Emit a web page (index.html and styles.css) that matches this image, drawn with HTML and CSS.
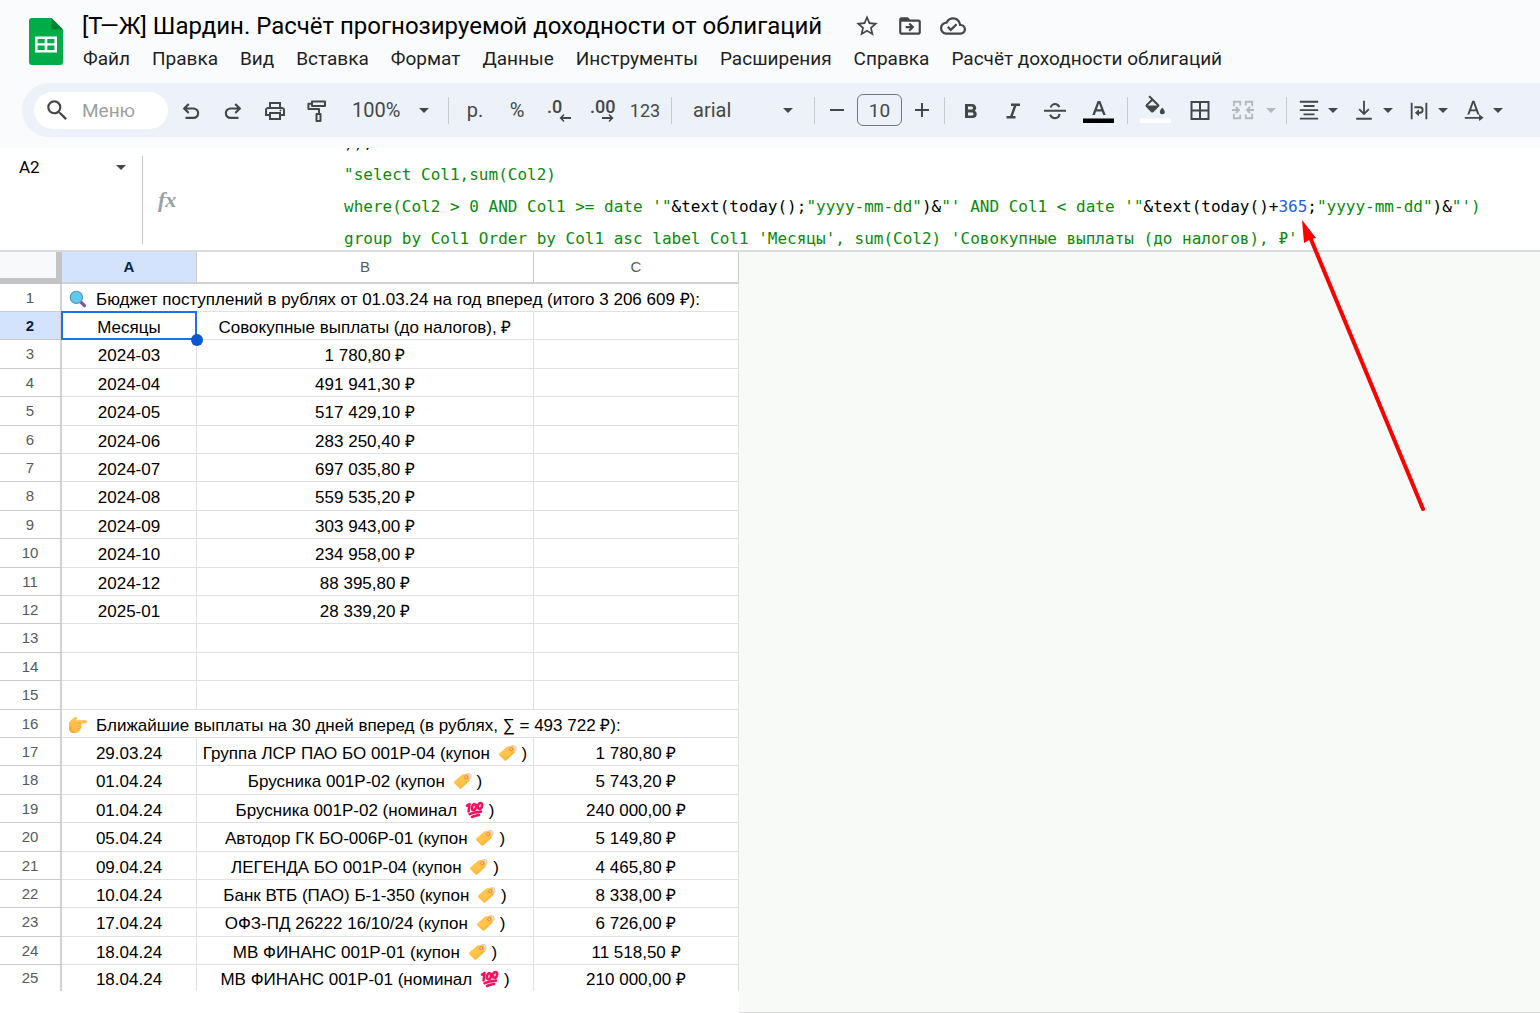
FILE: index.html
```html
<!DOCTYPE html>
<html lang="ru">
<head>
<meta charset="utf-8">
<meta name="viewport" content="width=device-width, initial-scale=1">
<title>[Т—Ж] Шардин. Расчёт прогнозируемой доходности от облигаций</title>
<link rel="stylesheet" href="styles.css">
</head>
<body>
<svg class="sprite" aria-hidden="true">
  <symbol id="i-tag" viewBox="0 0 20 18">
    <circle cx="15.2" cy="4.4" r="2.9" fill="none" stroke="#d3ccd8" stroke-width="1.2"/>
    <path d="M9.6 2.6 14.6 2.2Q16.4 2.2 16.5 4L16.6 8.8 8.6 16.3Q7.4 17.3 6.3 16.2L1.6 11.6Q.6 10.4 1.7 9.3Z" fill="#fdb83e"/>
    <path d="M9.6 2.6 14.6 2.2Q16.4 2.2 16.5 4L16.55 6 8 13.8 1.2 10.6 1.7 9.3Z" fill="#ffc94f" opacity=".7"/>
    <circle cx="13.2" cy="5.2" r="2" fill="#f08a4b"/><circle cx="13.2" cy="5.2" r=".9" fill="#e9d3d0"/>
  </symbol>
  <symbol id="i-hundred" viewBox="0 0 20 18">
    <g fill="none" stroke="#f0135f" stroke-linecap="round" stroke-linejoin="round">
      <path d="M2 4.6 4.5 3.2 3.6 10.4" stroke-width="2.6"/>
      <ellipse cx="9" cy="6.2" rx="1.9" ry="3.1" stroke-width="2.6" transform="rotate(12 9 6.2)"/>
      <ellipse cx="15" cy="4.9" rx="2" ry="3" stroke-width="2.6" transform="rotate(15 15 4.900)"/>
      <path d="M4.600 13.200Q9 11 16 10.600M7 16Q10 14.600 14 14" stroke-width="2.600"/>
    </g>
  </symbol>
  <symbol id="i-lens" viewBox="0 0 20 20">
    <path d="M12.4 12.800 17.200 17.400" stroke="#8c4f97" stroke-width="3.600" stroke-linecap="round"/>
    <circle cx="8.200" cy="8.200" r="6.800" fill="#5fcbea" stroke="#5b8fb8" stroke-width="1.300"/>
  </symbol>
  <symbol id="i-hand" viewBox="0 0 20 18">
    <path d="M1 7Q3.600 3 7 1Q9.200 0 9 2.300L8 4.200H17.400Q19.300 4.400 19.300 5.700T17.500 7.200H12.600Q14.300 8.200 13 10Q14 11.500 12.300 12.800Q12.800 14.600 11 15.300Q10.800 17 8.600 17H4.500Q1.600 16.600 1 13Z" fill="#ffc043"/>
    <path d="M9 7.400H13M8.600 10.200H12.900M8.600 13H12.200" stroke="#f5a84a" stroke-width="1" fill="none" stroke-linecap="round"/>
    <path d="M1 12.500Q1.800 16.400 4.500 17H8Q3.600 14.800 3 9Z" fill="#f29a3c" opacity=".6"/>
  </symbol>
</svg>

<header class="top">
  <div class="brand">
    <svg class="logo" viewBox="0 0 34 47" role="img" aria-label="Таблицы">
      <path d="M3 0H22.500L34 11.500V44Q34 47 31 47H3Q0 47 0 44V3Q0 0 3 0Z" fill="#00ac47"/>
      <path d="M22.500 0 34 11.500H22.500Z" fill="#00832d"/>
      <path d="M6 18.500H28V34.500H6ZM8.600 21V25.200H15.700V21ZM18.300 21V25.200H25.400V21ZM8.600 27.600V31.900H15.700V27.600ZM18.300 27.600V31.900H25.400V27.600Z" fill="#fff" fill-rule="evenodd"/>
    </svg>
    <div class="heading">
      <div class="title-row">
        <h1>[Т—Ж] Шардин. Расчёт прогнозируемой доходности от облигаций</h1>
        <button class="doc-action" aria-label="Пометить"><svg viewBox="0 0 24 24"><path d="M22 9.240l-7.190-.620L12 2 9.190 8.630 2 9.240l5.460 4.730L5.820 21 12 17.270 18.180 21l-1.630-7.030L22 9.240zM12 15.400l-3.760 2.270 1-4.280-3.320-2.880 4.380-.380L12 6.100l1.710 4.040 4.380.380-3.320 2.880 1 4.280L12 15.400z"/></svg></button>
        <button class="doc-action" aria-label="Переместить"><svg viewBox="0 0 24 24"><path d="M20 6h-8l-2-2H4c-1.100 0-2 .900-2 2v12c0 1.100.900 2 2 2h16c1.100 0 2-.900 2-2V8c0-1.100-.900-2-2-2zm0 12H4V8h16v10zm-8-1 4-4-4-4-1.400 1.400L12.200 12H8v2h4.200l-1.600 1.600L12 17z"/></svg></button>
        <button class="doc-action" aria-label="Сохранено на Диске"><svg viewBox="0 0 24 24"><path d="M19.350 10.040C18.670 6.590 15.640 4 12 4 9.110 4 6.600 5.640 5.350 8.040 2.340 8.360 0 10.910 0 14c0 3.310 2.690 6 6 6h13c2.760 0 5-2.240 5-5 0-2.640-2.050-4.780-4.650-4.960zM19 18H6c-2.210 0-4-1.790-4-4 0-2.050 1.530-3.760 3.560-3.970l1.070-.110.500-.950C8.080 7.140 9.940 6 12 6c2.620 0 4.880 1.860 5.390 4.430l.300 1.500 1.530.110c1.560.100 2.780 1.410 2.780 2.960 0 1.650-1.350 3-3 3zm-9-3.820-2.090-2.090L6.500 13.500 10 17l6.010-6.010-1.410-1.410L10 14.180z"/></svg></button>
      </div>
      <nav class="menu">
        <button>Файл</button><button>Правка</button><button>Вид</button><button>Вставка</button><button>Формат</button><button>Данные</button><button>Инструменты</button><button>Расширения</button><button>Справка</button><button>Расчёт доходности облигаций</button>
      </nav>
    </div>
  </div>

  <div class="toolbar" role="toolbar" aria-label="Панель инструментов">
    <label class="search">
      <svg viewBox="0 0 24 24" aria-hidden="true"><path d="M15.500 14h-.790l-.280-.270A6.470 6.470 0 0 0 16 9.500 6.500 6.500 0 1 0 9.500 16c1.610 0 3.090-.590 4.230-1.570l.270.280v.790l5.700 5.700 1.490-1.490L15.500 14zm-6 0C7.010 14 5 11.990 5 9.500S7.010 5 9.500 5 14 7.010 14 9.500 11.990 14 9.500 14z"/></svg>
      <input type="text" placeholder="Меню" aria-label="Поиск в меню">
    </label>
    <button class="tool" aria-label="Отменить"><svg viewBox="0 0 24 24"><path d="M6.500 21v-2.200h7.800q1.600 0 2.700-1 1.100-1 1.100-2.600t-1.100-2.600q-1.100-1-2.700-1H7.800l2.700 2.700L9 15.800 3.700 10.500 9 5.200l1.500 1.500-2.700 2.700h6.500q2.500 0 4.200 1.600t1.700 4.200-1.700 4.200T14.300 21z"/></svg></button>
    <button class="tool" aria-label="Повторить"><svg viewBox="0 0 24 24"><path d="M17.500 21v-2.200H9.700q-1.600 0-2.700-1-1.100-1-1.100-2.600t1.100-2.600q1.100-1 2.700-1h6.500l-2.700 2.700 1.500 1.500 5.300-5.300L15 5.200l-1.500 1.500 2.700 2.700H9.700q-2.500 0-4.200 1.600t-1.700 4.200 1.700 4.200T9.700 21z"/></svg></button>
    <button class="tool" aria-label="Печать"><svg viewBox="0 0 24 24"><path d="M19 9h-1V4H6v5H5c-1.660 0-3 1.340-3 3v6h4v4h12v-4h4v-6c0-1.660-1.340-3-3-3zM8 6h8v3H8V6zm8 14H8v-4h8v4zm2-4v-2H6v2H4v-4c0-.550.450-1 1-1h14c.550 0 1 .450 1 1v4h-2zm-.500-4.500a1 1 0 1 0 .010 2 1 1 0 0 0-.010-2z"/></svg></button>
    <button class="tool" aria-label="Копировать форматирование"><svg viewBox="0 0 24 24"><path d="M7 2.500h13q1 0 1 1V8q0 1-1 1H7Q6 9 6 8V6.800H4.400V10H14q1 0 1 1v4h.500q1 0 1 1v7q0 1-1 1h-4q-1 0-1-1v-7q0-1 1-1H13v-3H3.400q-1 0-1-1V5.800q0-1 1-1H6V3.500q0-1 1-1zM8 4.500V7h11V4.500zM12.500 17v5h2v-5z"/></svg></button>
    <select class="zoom" aria-label="Масштаб"><option>100%</option></select>
    <span class="sep"></span>
    <button class="tool text" aria-label="Денежный формат">р.</button>
    <button class="tool text" aria-label="Процентный формат">%</button>
    <button class="tool decimals" aria-label="Уменьшить число знаков"><span>.0</span><svg viewBox="0 0 12 8"><path d="M4.500 0 5.500 1 3.800 2.900H12V5.100H3.800L5.500 7 4.500 8 .5 4Z"/></svg></button>
    <button class="tool decimals" aria-label="Увеличить число знаков"><span>.00</span><svg viewBox="0 0 12 8"><path d="M7.500 0 6.500 1 8.200 2.900H0V5.100H8.200L6.500 7 7.500 8 11.500 4Z"/></svg></button>
    <button class="tool small" aria-label="Другие форматы">123</button>
    <span class="sep"></span>
    <select class="font" aria-label="Шрифт"><option>arial</option></select>
    <span class="sep"></span>
    <button class="tool step" aria-label="Уменьшить размер"><svg viewBox="0 0 24 24"><path d="M5 11h14v2H5z"/></svg></button>
    <input class="size" type="text" value="10" aria-label="Размер шрифта">
    <button class="tool step" aria-label="Увеличить размер"><svg viewBox="0 0 24 24"><path d="M11 5h2v6h6v2h-6v6h-2v-6H5v-2h6z"/></svg></button>
    <span class="sep"></span>
    <button class="tool" aria-label="Полужирный"><svg viewBox="0 0 24 24"><path d="M15.600 12.790c.970-.670 1.650-1.770 1.650-2.790 0-2.260-1.750-4-4-4H6v14h8.040c2.090 0 3.710-1.700 3.710-3.790 0-1.520-.860-2.820-2.150-3.420zM9 8.500h3.500c.830 0 1.500.670 1.500 1.500s-.670 1.500-1.500 1.500H9v-3zm4 9H9v-3h4c.830 0 1.500.670 1.500 1.500s-.670 1.500-1.500 1.500z"/></svg></button>
    <button class="tool" aria-label="Курсив"><svg viewBox="0 0 24 24"><path d="M10 5.500v2.600h2.800L9.200 18H5.500v2.600h9V18h-2.700l3.600-9.900H19V5.500z"/></svg></button>
    <button class="tool" aria-label="Зачёркнутый"><svg viewBox="0 0 24 24"><path d="M1 11.700h22v2H1zM6.700 9.500C7.500 6.500 9.500 5 12 5s4.400 1.300 5.200 3.700l-2.100.8C14.600 8 13.600 7.100 12 7.100c-1.500 0-2.600.8-3.100 2.400zM17.500 16c0 3-2.300 5.200-5.400 5.200-3 0-5.100-1.700-5.900-4.200l2-.8c.6 1.800 2 2.900 3.900 2.900 1.800 0 3.200-1.100 3.200-3.100z"/></svg></button>
    <button class="tool swatch" aria-label="Цвет текста"><svg viewBox="0 0 32 32"><path d="M14.600 7h2.800l5.300 14h-2.500l-1.300-3.600h-5.800L11.800 21H9.300zM13.900 15.300h4.200L16 9.400z"/><path fill="#000" d="M0 24.500h31v4.500H0z"/></svg></button>
    <span class="sep"></span>
    <button class="tool swatch" aria-label="Цвет заливки"><svg viewBox="0 0 32 32"><path d="M8.300 2.800 9.900 1.400 19 10.400Q20 11.500 19 12.600L13.500 18Q12.200 19 11 18L5.900 12.800Q4.900 11.600 5.900 10.400L11 5.500ZM12.400 6.900 7.700 11.600H17.100ZM22.200 13.500q2.600 2.900 2.600 4.200a2.500 2.500 0 0 1-5 0q0-1.300 2.400-4.200z"/><path fill="#fff" d="M0 24.500h31v4.500H0z"/></svg></button>
    <button class="tool" aria-label="Границы"><svg viewBox="0 0 24 24"><path d="M2.500 3v19h19V3h-19zm8.500 17H4.500v-6.500H11V20zm0-8.500H4.500V5H11v6.500zm8.500 8.500H13v-6.500h6.500V20zm0-8.500H13V5h6.500v6.500z"/></svg></button>
    <button class="tool split" aria-label="Объединить ячейки" disabled><svg viewBox="0 0 24 24"><path d="M1 2h9v5H8V4H3v4H1zm13 0h9v6h-2V4h-5v3h-2zM1 16h2v4h5v-3h2v5H1zm20 0h2v6h-9v-5h2v3h5zM0 11h5L3.500 9.500 5 8l4 4-4 4-1.500-1.500L5 13H0zm24 0h-5l1.500-1.500L19 8l-4 4 4 4 1.500-1.500L19 13h5z"/></svg><i class="caret"></i></button>
    <span class="sep"></span>
    <button class="tool split" aria-label="Горизонтальное выравнивание"><svg viewBox="0 0 24 24"><path d="M2 2h20v2H2zm4 4.600h12v2H6zM2 11.200h20v2H2zm4 4.600h12v2H6zM2 20.400h20v2H2z"/></svg><i class="caret"></i></button>
    <button class="tool split" aria-label="Вертикальное выравнивание"><svg viewBox="0 0 24 24"><path d="M3.500 20.500h17v2h-17zM11 2h2v12l3.600-3.600L18 11.800l-6 6-6-6 1.400-1.400L11 14z"/></svg><i class="caret"></i></button>
    <button class="tool split" aria-label="Перенос текста"><svg viewBox="0 0 24 24"><path d="M3 4h2v18H3zm16 0h2v18h-2zM7 8h6q4 0 4 4t-4 4H12V18.800L7.500 15 12 11.200V14h1q2 0 2-2t-2-2H7z"/></svg><i class="caret"></i></button>
    <button class="tool split" aria-label="Поворот текста"><svg viewBox="0 0 24 24"><path d="M10.200 2h2.200L18 17h-2.300l-1.300-3.600H8.200L6.900 17H4.700zm-1.300 9.400h4.800L11.300 4.600zM2 19.500h15.500v-2.800L22.500 20.500l-5 3.500v-2.500H2z"/></svg><i class="caret"></i></button>
  </div>
</header>

<section class="formula-bar">
  <label class="name-box"><select aria-label="Диапазон"><option>A2</option></select></label>
  <span class="fx" aria-hidden="true">fx</span>
  <div class="formula" role="textbox" aria-label="Формула" tabindex="0"><pre><b>));</b>
"select Col1,sum(Col2)
where(Col2 &gt; 0 AND Col1 &gt;= date '"<b>&amp;text(today();</b>"yyyy-mm-dd"<b>)&amp;</b>"' AND Col1 &lt; date '"<b>&amp;text(today()+</b><em>365</em><b>;</b>"yyyy-mm-dd"<b>)&amp;</b>"')
group by Col1 Order by Col1 asc label Col1 'Месяцы', sum(Col2) 'Совокупные выплаты (до налогов), ₽'</pre></div>
</section>

<main class="sheet">
  <table class="grid">
    <colgroup><col class="c-num"><col class="c-a"><col class="c-b"><col class="c-c"></colgroup>
    <thead><tr><td class="corner"></td><th scope="col" class="active">A</th><th scope="col">B</th><th scope="col">C</th></tr></thead>
    <tbody>
      <tr><th scope="row">1</th><td colspan="3" class="wide"><svg class="emoji lead"><use href="#i-lens"/></svg>Бюджет поступлений в рублях от 01.03.24 на год вперед (итого 3 206 609 ₽):</td></tr>
      <tr><th scope="row" class="active">2</th><td class="selected">Месяцы</td><td>Совокупные выплаты (до налогов), ₽</td><td></td></tr>
      <tr><th scope="row">3</th><td>2024-03</td><td>1 780,80 ₽</td><td></td></tr>
      <tr><th scope="row">4</th><td>2024-04</td><td>491 941,30 ₽</td><td></td></tr>
      <tr><th scope="row">5</th><td>2024-05</td><td>517 429,10 ₽</td><td></td></tr>
      <tr><th scope="row">6</th><td>2024-06</td><td>283 250,40 ₽</td><td></td></tr>
      <tr><th scope="row">7</th><td>2024-07</td><td>697 035,80 ₽</td><td></td></tr>
      <tr><th scope="row">8</th><td>2024-08</td><td>559 535,20 ₽</td><td></td></tr>
      <tr><th scope="row">9</th><td>2024-09</td><td>303 943,00 ₽</td><td></td></tr>
      <tr><th scope="row">10</th><td>2024-10</td><td>234 958,00 ₽</td><td></td></tr>
      <tr><th scope="row">11</th><td>2024-12</td><td>88 395,80 ₽</td><td></td></tr>
      <tr><th scope="row">12</th><td>2025-01</td><td>28 339,20 ₽</td><td></td></tr>
      <tr><th scope="row">13</th><td></td><td></td><td></td></tr>
      <tr><th scope="row">14</th><td></td><td></td><td></td></tr>
      <tr><th scope="row">15</th><td></td><td></td><td></td></tr>
      <tr><th scope="row">16</th><td colspan="3" class="wide"><svg class="emoji lead"><use href="#i-hand"/></svg>Ближайшие выплаты на 30 дней вперед (в рублях, ∑ = 493 722 ₽):</td></tr>
      <tr><th scope="row">17</th><td>29.03.24</td><td>Группа ЛСР ПАО БО 001P-04 (купон <svg class="emoji"><use href="#i-tag"/></svg>)</td><td>1 780,80 ₽</td></tr>
      <tr><th scope="row">18</th><td>01.04.24</td><td>Брусника 001P-02 (купон <svg class="emoji"><use href="#i-tag"/></svg>)</td><td>5 743,20 ₽</td></tr>
      <tr><th scope="row">19</th><td>01.04.24</td><td>Брусника 001P-02 (номинал <svg class="emoji"><use href="#i-hundred"/></svg>)</td><td>240 000,00 ₽</td></tr>
      <tr><th scope="row">20</th><td>05.04.24</td><td>Автодор ГК БО-006P-01 (купон <svg class="emoji"><use href="#i-tag"/></svg>)</td><td>5 149,80 ₽</td></tr>
      <tr><th scope="row">21</th><td>09.04.24</td><td>ЛЕГЕНДА БО 001P-04 (купон <svg class="emoji"><use href="#i-tag"/></svg>)</td><td>4 465,80 ₽</td></tr>
      <tr><th scope="row">22</th><td>10.04.24</td><td>Банк ВТБ (ПАО) Б-1-350 (купон <svg class="emoji"><use href="#i-tag"/></svg>)</td><td>8 338,00 ₽</td></tr>
      <tr><th scope="row">23</th><td>17.04.24</td><td>ОФЗ-ПД 26222 16/10/24 (купон <svg class="emoji"><use href="#i-tag"/></svg>)</td><td>6 726,00 ₽</td></tr>
      <tr><th scope="row">24</th><td>18.04.24</td><td>МВ ФИНАНС 001P-01 (купон <svg class="emoji"><use href="#i-tag"/></svg>)</td><td>11 518,50 ₽</td></tr>
      <tr><th scope="row">25</th><td>18.04.24</td><td>МВ ФИНАНС 001P-01 (номинал <svg class="emoji"><use href="#i-hundred"/></svg>)</td><td>210 000,00 ₽</td></tr>
    </tbody>
  </table>
  <div class="blank"></div>
</main>

<svg class="arrow" viewBox="0 0 126 296" aria-hidden="true">
  <path d="M10 19 123 291" stroke="#fe0000" stroke-width="4" stroke-linecap="round"/>
  <path d="M2 2 16 20 11 21 4 25Z" fill="#fe0000"/>
</svg>
</body>
</html>
```
FILE: styles.css
```css
* { box-sizing: border-box; }

body {
  margin: 0;
  min-height: 100vh;
  display: flex;
  flex-direction: column;
  position: relative;
  overflow-x: hidden;
  background: #fff;
  color: #000;
  font-family: Roboto, "Liberation Sans", sans-serif;
}

button, select, input {
  margin: 0;
  padding: 0;
  border: 0;
  background: none;
  color: inherit;
  font: inherit;
}

.sprite { display: none; }

/* Header */
.top { height: 148px; background: #f9fbfd; flex: none; }
.brand { display: flex; height: 83px; padding: 18px 0 0 29px; }
.logo { width: 34px; height: 47px; flex: none; }
.heading { margin: -9px 0 0 19px; }
.title-row { display: flex; align-items: center; height: 34px; white-space: nowrap; }
h1 { margin: 0 32px 0 0; font-size: 24px; line-height: 34px; font-weight: 400; }
.doc-action { width: 26px; height: 26px; margin-right: 17px; }
.doc-action svg { width: 26px; height: 26px; display: block; fill: #444746; }
.menu { display: flex; gap: 22px; height: 30px; padding-left: 1px; align-items: center; white-space: nowrap; color: #1f1f1f; font-size: 19px; }

/* Toolbar */
.toolbar {
  display: flex;
  align-items: center;
  height: 54px;
  margin-left: 22px;
  padding-left: 12px;
  border-radius: 27px 0 0 27px;
  background: #edf1fa;
  color: #444746;
  overflow: hidden;
}
.toolbar > * { flex: none; }
.toolbar svg { fill: currentColor; }
.search { display: flex; align-items: center; width: 134px; height: 37px; margin-right: 2px; padding-left: 10px; border-radius: 19px; background: #fff; }
.search svg { width: 26px; height: 26px; flex: none; }
.search input { width: 80px; margin-left: 12px; font-size: 19px; outline: 0; }
.search input::placeholder { color: #9c9f9e; opacity: 1; }
.tool { width: 42px; height: 42px; display: flex; align-items: center; justify-content: center; }
.tool svg { width: 24px; height: 24px; }
.tool.text { font-size: 20px; }
.tool.small { font-size: 18px; }
.tool.step { width: 34px; }
.tool.decimals { width: 43px; flex-direction: column; align-items: flex-end; padding-right: 10px; font-size: 18px; font-weight: 500; line-height: 15px; }
.tool.decimals span { align-self: flex-start; padding-left: 9px; }
.tool.decimals svg { width: 12px; height: 8px; }
.tool.swatch { width: 46px; }
.tool.swatch svg { width: 32px; height: 32px; }
.tool.split { width: 55px; justify-content: flex-start; gap: 8px; padding-left: 6px; }
.tool.split svg { width: 22px; height: 22px; }
.tool.split:disabled { width: 60px; gap: 12px; padding-left: 11px; color: #b4b8bd; }
.caret { border: 5px solid transparent; border-top-color: currentColor; border-bottom: 0; }
.sep { width: 1px; height: 27px; margin: 0 5px; background: #c7c9cc; }
select {
  appearance: none;
  background-image: url("data:image/svg+xml,%3Csvg xmlns='http://www.w3.org/2000/svg' width='10' height='5'%3E%3Cpath d='M0 0h10L5 5z' fill='%23444746'/%3E%3C/svg%3E");
  background-repeat: no-repeat;
}
.zoom { width: 105px; height: 40px; padding-left: 14px; font-size: 20px; background-position: 81px 18px; }
.font { width: 132px; height: 40px; padding-left: 16px; font-size: 20px; background-position: 106px 18px; }
.size { width: 45px; height: 32px; margin: 0 3px; border: 1px solid #747775; border-radius: 6px; text-align: center; font-size: 19px; }

/* Formula bar */
.formula-bar { display: flex; height: 104px; flex: none; border-bottom: 2px solid #d9dadb; }
.name-box { width: 143px; height: 88px; margin-top: 8px; border-right: 1px solid #c7c7c7; }
.name-box select { width: 140px; height: 22px; padding-left: 19px; font-size: 17px; background-position: 116px 9px; }
.fx { width: 201px; padding: 38px 0 0 15px; color: #9aa0a6; font: italic bold 22px/28px "Liberation Serif", serif; }
.formula { flex: 1; overflow: hidden; }
pre { margin: -21px 0 0; font: 16px/32px "DejaVu Sans Mono", monospace; color: #0b8a0b; }
pre b { font-weight: 400; color: #000; }
pre em { font-style: normal; color: #1f5fdd; }

/* Grid */
.sheet { display: flex; flex: 1; align-items: flex-start; overflow: hidden; }
.grid {
  width: 739px;
  flex: none;
  table-layout: fixed;
  border-collapse: separate;
  border-spacing: 0;
  font: 17px/20px "Liberation Sans", Arial, sans-serif;
}
.c-num { width: 62px; }
.c-a { width: 135px; }
.c-b { width: 337px; }
.c-c { width: 205px; }
.grid td, .grid th { padding: 0; text-align: center; white-space: nowrap; }
.grid th { color: #575a5a; font-size: 15px; font-weight: 400; border: 0 solid #c9cbcb; border-width: 0 1px 1px 0; }
.grid thead th { height: 32px; border-bottom: 2px solid #d0d1d1; }
.grid .corner { border: solid #c4c4c4; border-width: 0 6px 6px 0; background: #f8f9fa; }
.grid tbody th { border-right: 2px solid #d0d1d1; }
.grid th.active { background: #d3e3fd; color: #041e49; font-weight: 700; }
.grid tbody td { padding-top: 4px; border: 0 solid #e1e1e1; border-width: 0 1px 1px 0; }
.grid tbody tr { height: 28px; }
.grid tbody tr:nth-child(5n), .grid tbody tr:nth-child(5n+3) { height: 29px; }
.grid tbody tr:last-child { height: 26px; }
.grid tbody tr:last-child > * { border-bottom: 0; }
.grid tbody td.wide { text-align: left; padding-left: 6px; }
.grid td.selected { position: relative; }
.selected::before { content: ""; position: absolute; inset: -1px; border: 2px solid #1a73e8; }
.selected::after { content: ""; position: absolute; z-index: 1; right: -7px; bottom: -7px; width: 12px; height: 12px; border-radius: 50%; background: #0b57d0; }
.emoji { width: 20px; height: 18px; margin: 0 4px 0 3px; vertical-align: -3px; }
.emoji.lead { margin: 0 8px 0 0; }
.blank { flex: 1; align-self: stretch; background: #f8faf7; border-bottom: 1px solid #dcdddc; }

/* Pointer drawn over the sheet */
.arrow { position: absolute; left: 1300px; top: 218px; width: 126px; height: 296px; pointer-events: none; fill: none; }
```
